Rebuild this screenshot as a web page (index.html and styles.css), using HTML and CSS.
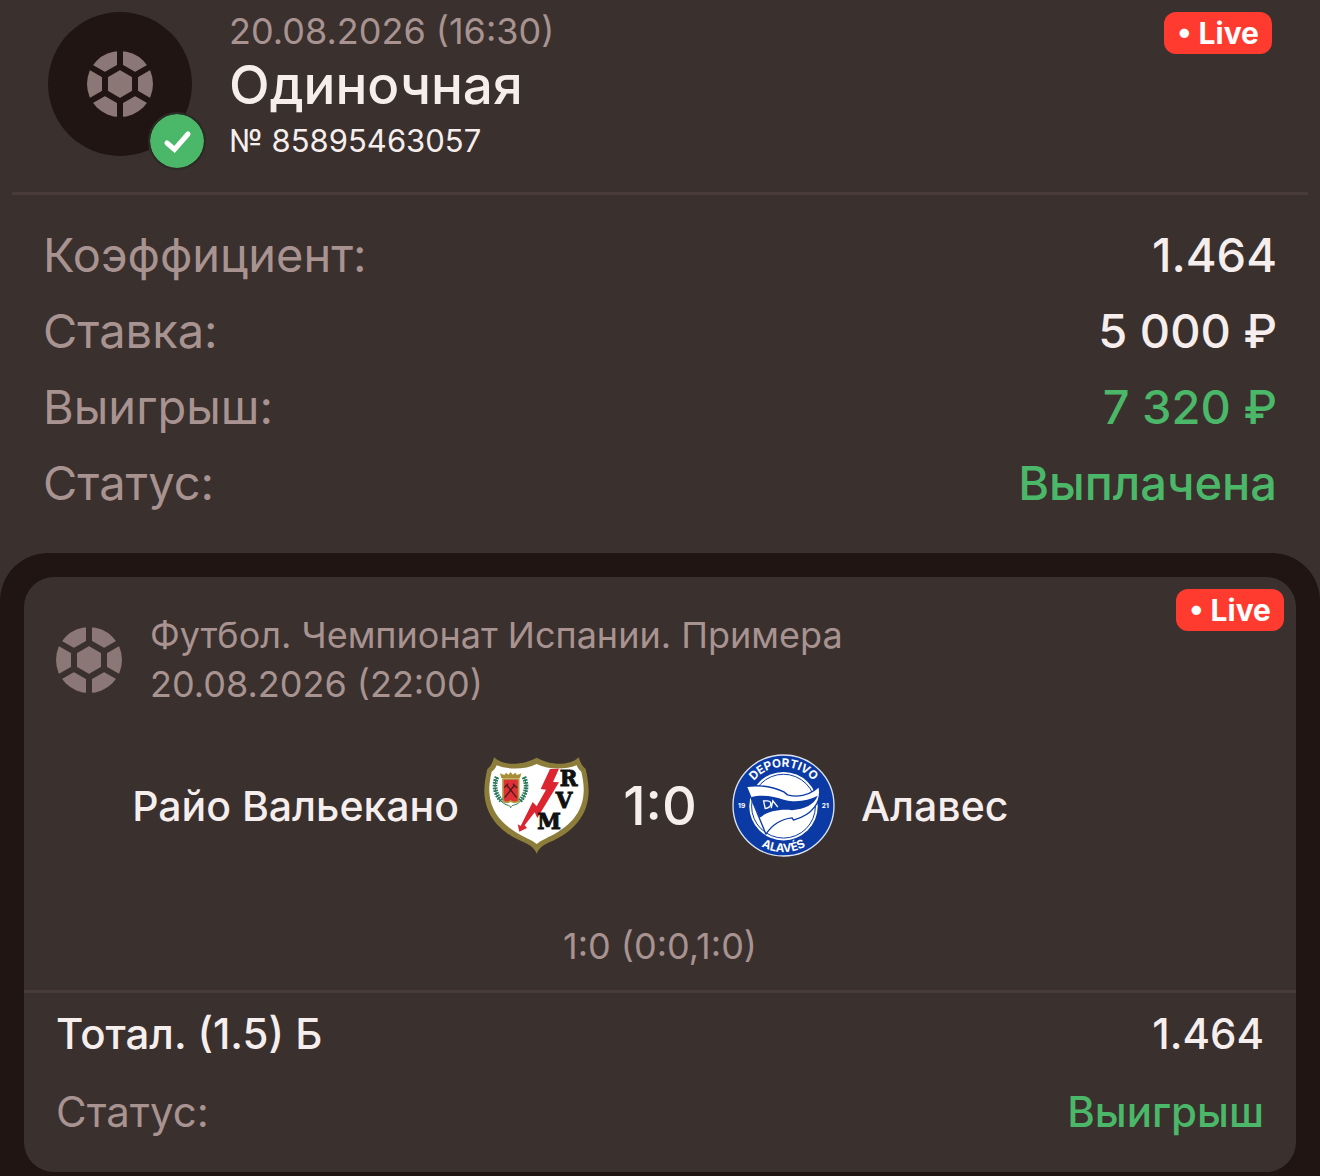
FILE: index.html
```html
<!DOCTYPE html>
<html lang="ru">
<head>
    <meta charset="UTF-8">
    <meta name="viewport" content="width=device-width, initial-scale=1.0">
    <title>Одиночная № 85895463057</title>
    <link rel="stylesheet" href="styles.css">
</head>
<body>
    <!-- Shared ball icon -->
    <svg class="sprite" aria-hidden="true">
        <mask id="ballMask" maskUnits="userSpaceOnUse" x="0" y="0" width="66" height="66">
            <circle cx="33" cy="33" r="33" fill="#fff"/>
            <g fill="none" stroke="#000" stroke-width="6">
                <path d="M33 15.7 L48 24.3 V41.7 L33 50.3 L18 41.7 V24.3 Z"/>
                <path d="M33 15.7 V-2 M48 24.3 L66 14 M48 41.7 L66 52 M33 50.3 V68 M18 41.7 L0 52 M18 24.3 L0 14"/>
            </g>
        </mask>
        <symbol id="ball" viewBox="0 0 66 66">
            <rect width="66" height="66" fill="currentColor" mask="url(#ballMask)"/>
        </symbol>
    </svg>

    <!-- Bet header -->
    <header class="bet-header">
        <div class="avatar">
            <svg class="ball-icon"><use href="#ball"/></svg>
            <svg class="check-icon" viewBox="0 0 54 54">
                <circle cx="27" cy="27" r="27" fill="#4bb768"/>
                <path d="M17 29 L24.5 35.5 L38 20" fill="none" stroke="#fff" stroke-width="5" stroke-linecap="round"/>
            </svg>
        </div>
        <div class="bet-title">
            <div class="bet-date">20.08.2026 (16:30)</div>
            <h1>Одиночная</h1>
            <div class="bet-number">№ 85895463057</div>
        </div>
        <span class="live-badge">• Live</span>
    </header>

    <!-- Bet summary -->
    <dl class="summary">
        <div class="row">
            <dt>Коэффициент:</dt>
            <dd>1.464</dd>
        </div>
        <div class="row">
            <dt>Ставка:</dt>
            <dd>5 000 ₽</dd>
        </div>
        <div class="row">
            <dt>Выигрыш:</dt>
            <dd class="green">7 320 ₽</dd>
        </div>
        <div class="row">
            <dt>Статус:</dt>
            <dd class="green">Выплачена</dd>
        </div>
    </dl>

    <!-- Events -->
    <main class="events">
        <section class="event-card">
            <span class="live-badge card-badge">• Live</span>
            <div class="event-header">
                <svg class="ball-icon"><use href="#ball"/></svg>
                <div class="event-info">
                    <div>Футбол. Чемпионат Испании. Примера</div>
                    <div>20.08.2026 (22:00)</div>
                </div>
            </div>

            <div class="match">
                <div class="team home">
                    <span>Райо Вальекано</span>
                    <svg class="crest" viewBox="45 40 315 315">
                        <path d="M75 53 C105 82 165 75 203 54 C240 75 300 82 329 53 C333 67 340 80 350 88 C354 105 359 130 359 158 C356 245 290 290 232 312 Q210 323 203 342 Q196 323 174 312 C116 290 49 245 46 158 C46 130 51 105 55 88 C66 80 72 67 75 53 Z" fill="#8c7d3a"/>
                        <path d="M83 77 C118 91 170 90 203 73 C238 90 285 91 323 77 C326 85 332 92 337 96 C342 118 345 137 344 158 C341 234 280 274 229 297 Q212 304 203 313 Q194 304 177 297 C126 274 65 234 61 158 C60 137 63 118 68 96 C74 92 80 85 83 77 Z" fill="#fff"/>
                        <path d="M243 88 L270 87 L252 127 L270 128 L205 235 L197 218 L167 257 L174 265 L151 276 L146 254 L155 259 L191 187 L203 200 L231 150 L215 148 Z" fill="#dc2530"/>
                        <path d="M102 118 H149 V184 Q137 192 125 184 Q112 192 102 184 Z" fill="#df3038" stroke="#b09a40" stroke-width="5"/>
                        <path d="M97 115 L93 101 L106 106 L111 99 L118 105 L125 97 L131 105 L139 99 L144 106 L157 101 L153 115 Z" fill="#a88d38"/>
                        <path d="M107 174 L137 136 M143 174 L113 136 M106 144 L117 132 M132 132 L144 145" stroke="#4c1b18" stroke-width="4" fill="none"/>
                        <path d="M84 112 C72 138 79 174 103 190 C115 200 121 193 125 204 C129 193 138 199 148 190 C173 172 177 138 165 112" fill="none" stroke="#28785a" stroke-width="3"/>
                        <path d="M84 112 C72 138 79 165 98 184 M165 112 C177 138 171 165 153 184" fill="none" stroke="#28785a" stroke-width="14" stroke-dasharray="5 3"/>
                        <g class="crest-letters">
                            <text x="299" y="138">R</text>
                            <text x="285" y="204">V</text>
                            <text x="240" y="269">M</text>
                        </g>
                    </svg>
                </div>
                <div class="score">1:0</div>
                <div class="team">
                    <svg class="crest" viewBox="48 37 316 316">
                        <defs>
                            <path id="arcTop" d="M90 195 A116 116 0 0 1 322 195"/>
                            <path id="arcBottom" d="M66 195 A140 140 0 0 0 346 195"/>
                        </defs>
                        <circle cx="206" cy="195" r="152" fill="#0b3aa5" stroke="#dce3f4" stroke-width="4"/>
                        <circle cx="206" cy="197" r="103" fill="#fff"/>
                        <circle cx="206" cy="197" r="96" fill="none" stroke="#0b3aa5" stroke-width="3"/>
                        <path d="M94 137 C140 132 176 139 207 154 L218 163 C250 171 285 165 313 138 C322 181 296 223 236 239 L232 232 C203 235 174 250 153 281 Z" fill="#fff" stroke="#0b3aa5" stroke-width="4" stroke-linejoin="round"/>
                        <path d="M108 170 C145 160 181 169 207 178 C246 188 281 180 309 166 C298 193 270 206 232 209 C190 205 157 214 134 232 Z" fill="#0b3aa5"/>
                        <path d="M146 181 H157 Q171 182 167 194 Q164 202 151 204 Z M169 203 L174 181 L189 200" fill="none" stroke="#fff" stroke-width="4"/>
                        <g class="crest-ring">
                            <text><textPath href="#arcTop" startOffset="50%">DEPORTIVO</textPath></text>
                            <text><textPath href="#arcBottom" startOffset="50%">ALAVÉS</textPath></text>
                            <text class="crest-year" x="80" y="204">19</text>
                            <text class="crest-year" x="332" y="204">21</text>
                        </g>
                    </svg>
                    <span>Алавес</span>
                </div>
            </div>

            <div class="periods">1:0 (0:0,1:0)</div>

            <dl class="outcome">
                <div class="row">
                    <dt class="market">Тотал. (1.5) Б</dt>
                    <dd>1.464</dd>
                </div>
                <div class="row">
                    <dt>Статус:</dt>
                    <dd class="green">Выигрыш</dd>
                </div>
            </dl>
        </section>
    </main>
</body>
</html>
```
FILE: styles.css
```css
* {
    box-sizing: border-box;
}

body {
    margin: 0;
    min-height: 100vh;
    display: flex;
    flex-direction: column;
    font-family: Inter, Roboto, sans-serif;
    background-color: #3a302e;
    color: #f6eeed;
}

.sprite {
    position: absolute;
    width: 0;
    height: 0;
}

/* Bet header */
.bet-header {
    display: flex;
    align-items: flex-start;
    margin: 0 12px;
    padding: 12px 36px 30px;
    border-bottom: 3px solid #483b39;
}

.avatar {
    position: relative;
    display: flex;
    justify-content: center;
    align-items: center;
    width: 144px;
    height: 144px;
    border-radius: 50%;
    background-color: #201513;
}

.ball-icon {
    flex: none;
    width: 66px;
    height: 66px;
    color: #8b7775;
}

.check-icon {
    position: absolute;
    right: -12px;
    bottom: -12px;
    width: 54px;
    height: 54px;
    border-radius: 50%;
    box-shadow: 0 0 0 2px #2c2b25;
}

.bet-title {
    flex: 1;
    margin-left: 37px;
}

.bet-date {
    font-size: 36px;
    line-height: 38px;
    color: #a89391;
}

h1 {
    margin: 0;
    font-size: 53px;
    font-weight: 500;
    line-height: 70px;
}

.bet-number {
    font-size: 31px;
    line-height: 42px;
}

.live-badge {
    padding: 0 13px;
    border-radius: 12px;
    background-color: #ff3b30;
    color: #fff;
    font-size: 30px;
    font-weight: 700;
    line-height: 42px;
}

/* Label and value rows */
dl,
dd {
    margin: 0;
}

.row {
    display: flex;
    justify-content: space-between;
}

dt {
    color: #a89391;
}

dd {
    font-weight: 500;
}

dd.green {
    color: #4bb768;
}

.summary {
    padding: 22px 43px 32px;
    font-size: 47px;
    line-height: 76px;
}

/* Events */
.events {
    flex: 1;
    padding: 24px 24px 4px;
    border-radius: 48px 48px 0 0;
    background-color: #201513;
}

.event-card {
    position: relative;
    border-radius: 30px;
    background-color: #3a302e;
}

.card-badge {
    position: absolute;
    top: 12px;
    right: 12px;
}

.event-header {
    display: flex;
    align-items: center;
    gap: 28px;
    padding: 34px 32px 0;
}

.event-info {
    font-size: 36px;
    line-height: 49px;
    color: #a89391;
}

.match {
    display: flex;
    align-items: center;
    padding-top: 44px;
    font-size: 41px;
    font-weight: 500;
}

.team {
    flex: 1;
    display: flex;
    align-items: center;
    gap: 25px;
}

.home {
    justify-content: flex-end;
}

.crest {
    width: 105px;
    height: 105px;
}

.crest-letters {
    font-family: "DejaVu Serif", serif;
    font-size: 64px;
    font-weight: bold;
    text-anchor: middle;
    fill: #111;
    stroke: #111;
    stroke-width: 3px;
}

.crest-ring {
    font-family: Inter, sans-serif;
    font-size: 35px;
    font-weight: bold;
    text-anchor: middle;
    fill: #fff;
}

.crest-year {
    font-size: 20px;
}

.score {
    width: 142px;
    text-align: center;
    font-size: 54px;
}

.periods {
    padding: 64px 0 19px;
    text-align: center;
    font-size: 36px;
    line-height: 49px;
    color: #a89391;
}

.outcome {
    padding: 2px 32px 21px;
    border-top: 3px solid #483b39;
    font-size: 42px;
    line-height: 78px;
}

.market {
    color: #f6eeed;
    font-weight: 500;
}
```
